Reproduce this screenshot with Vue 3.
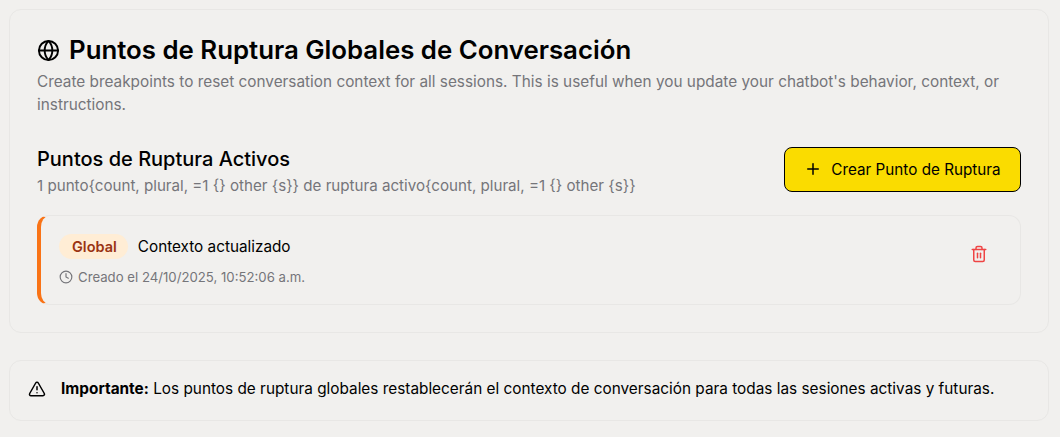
<script setup>
const subtitle = "1 punto{count, plural, =1 {} other {s}} de ruptura activo{count, plural, =1 {} other {s}}";
</script>
<template>
  <div class="page">
    <section class="card main">
      <h1 class="title">
        <svg class="globe" viewBox="0 0 24 24" fill="none" stroke="currentColor" stroke-width="2" stroke-linecap="round" stroke-linejoin="round">
          <circle cx="12" cy="12" r="10" />
          <path d="M12 2a14.5 14.5 0 0 0 0 20 14.5 14.5 0 0 0 0-20" />
          <path d="M2 12h20" />
        </svg>
        Puntos de Ruptura Globales de Conversación
      </h1>
      <p class="desc">Create breakpoints to reset conversation context for all sessions. This is useful when you update your chatbot's behavior, context, or instructions.</p>
      <div class="head">
        <div>
          <h2 class="sub">Puntos de Ruptura Activos</h2>
          <p class="count">{{ subtitle }}</p>
        </div>
        <button class="create">
          <svg class="plus" viewBox="0 0 24 24" fill="none" stroke="currentColor" stroke-width="2" stroke-linecap="round" stroke-linejoin="round">
            <path d="M5 12h14" />
            <path d="M12 5v14" />
          </svg>
          Crear Punto de Ruptura
        </button>
      </div>
      <div class="item">
        <div>
          <div class="line">
            <span class="badge">Global</span>
            <span class="name">Contexto actualizado</span>
          </div>
          <div class="date">
            <svg class="clock" viewBox="0 0 24 24" fill="none" stroke="currentColor" stroke-width="2" stroke-linecap="round" stroke-linejoin="round">
              <circle cx="12" cy="12" r="10" />
              <path d="M12 6v6l4 2" />
            </svg>
            Creado el 24/10/2025, 10:52:06 a.m.
          </div>
        </div>
        <svg class="trash" viewBox="0 0 24 24" fill="none" stroke="currentColor" stroke-width="2" stroke-linecap="round" stroke-linejoin="round">
          <path d="M3 6h18" />
          <path d="M19 6v14a2 2 0 0 1-2 2H7a2 2 0 0 1-2-2V6" />
          <path d="M8 6V4a2 2 0 0 1 2-2h4a2 2 0 0 1 2 2v2" />
          <path d="M10 11v6" />
          <path d="M14 11v6" />
        </svg>
      </div>
    </section>
    <section class="card note">
      <svg class="warn" viewBox="0 0 24 24" fill="none" stroke="currentColor" stroke-width="2" stroke-linecap="round" stroke-linejoin="round">
        <path d="m21.73 18-8-14a2 2 0 0 0-3.48 0l-8 14A2 2 0 0 0 4 21h16a2 2 0 0 0 1.73-3" />
        <path d="M12 9v4" />
        <path d="M12 17h.01" />
      </svg>
      <p class="note-text"><strong>Importante:</strong> Los puntos de ruptura globales restablecerán el contexto de conversación para todas las sesiones activas y futuras.</p>
    </section>
  </div>
</template>
<style scoped>
.page {
  box-sizing: border-box;
  height: 437px;
  overflow: hidden;
  padding: 9px 11px 0 9px;
  display: flex;
  flex-direction: column;
  gap: 27px;
  font-family: Inter, "Liberation Sans", sans-serif;
  color: #000;
}
.card {
  border: 1px solid #e8e7e5;
  border-radius: 12px;
}
.main {
  padding: 26px 27px 27px;
}
.title {
  margin: 0;
  display: flex;
  align-items: center;
  gap: 9px;
  font-size: 25.8px;
  line-height: 28px;
  font-weight: 600;
}
.globe {
  width: 23px;
  height: 23px;
  flex: none;
}
.desc {
  margin: 6px 0 0;
  font-size: 15.35px;
  line-height: 23px;
  color: #75757a;
}
.head {
  margin-top: 25px;
  display: flex;
  justify-content: space-between;
  align-items: center;
}
.sub {
  margin: 6px 0 0;
  font-size: 20px;
  line-height: 24px;
  font-weight: 500;
}
.count {
  margin: 3px 0 0;
  font-size: 15.15px;
  line-height: 23px;
  color: #75757a;
}
.create {
  box-sizing: border-box;
  width: 237px;
  height: 45px;
  display: flex;
  align-items: center;
  justify-content: center;
  gap: 9px;
  background: #fadc00;
  border: 1px solid #000;
  border-radius: 8px;
  font-family: inherit;
  font-size: 15.25px;
  font-weight: 400;
  color: #000;
}
.plus {
  width: 18px;
  height: 18px;
  flex: none;
}
.item {
  margin-top: 18px;
  box-sizing: border-box;
  height: 90px;
  padding: 0 32px 1px 18px;
  display: flex;
  justify-content: space-between;
  align-items: center;
  border: 1px solid #e8e7e5;
  border-left: 4px solid #f97316;
  border-radius: 12px;
}
.line {
  display: flex;
  align-items: center;
  gap: 10px;
}
.badge {
  padding: 0 11px 0 13px;
  height: 25px;
  line-height: 25px;
  border-radius: 13px;
  background: #ffedd5;
  color: #9a3412;
  font-size: 14.5px;
  font-weight: 600;
}
.name {
  font-size: 15.3px;
  font-weight: 400;
}
.date {
  margin-top: 9px;
  display: flex;
  align-items: center;
  gap: 5px;
  font-size: 13.2px;
  line-height: 18px;
  color: #75757a;
}
.clock {
  width: 14px;
  height: 14px;
  flex: none;
}
.trash {
  width: 18px;
  height: 18px;
  margin-bottom: 12px;
  color: #ef4444;
  flex: none;
}
.note {
  box-sizing: border-box;
  height: 61px;
  padding: 0 18px 4px;
  display: flex;
  align-items: center;
  gap: 15px;
}
.warn {
  width: 18px;
  height: 18px;
  flex: none;
}
.note-text {
  margin: 0;
  font-size: 15.35px;
  line-height: 20px;
}
.note-text strong {
  font-weight: 700;
}
</style>
<style>
html, body {
  background: #f1f0ee;
}
</style>
